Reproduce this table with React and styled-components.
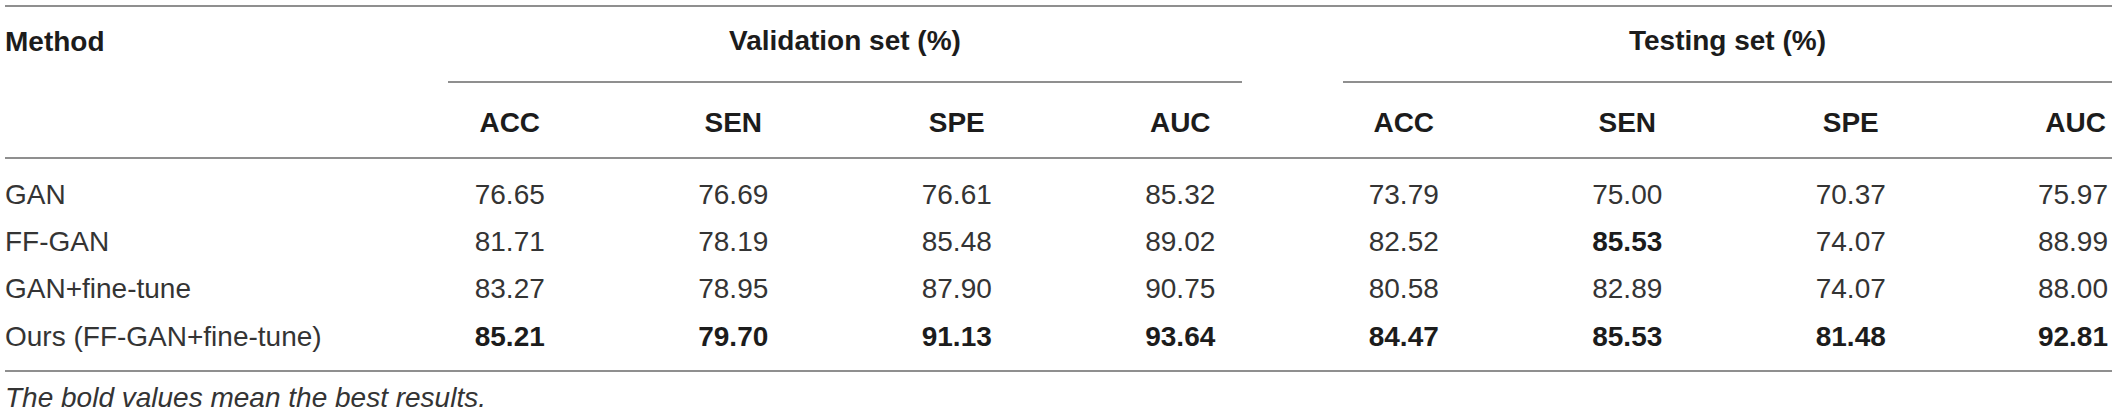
import React from "react";
import styled, { createGlobalStyle } from "styled-components";

const C = {
  text: "#343434",
  strong: "#1c1c1c",
  rule: "#8f8f8f",
};

const COLS = "393px repeat(7, 223.5px) 1fr";

const Global = createGlobalStyle`
  body { margin: 0; background: #ffffff; }
`;

const Page = styled.div`
  padding: 5px 5px 0;
  font-family: "Liberation Sans", Arial, Helvetica, sans-serif;
  font-size: 28px;
  line-height: 32px;
  color: ${C.text};
  overflow: hidden;
`;

const Head = styled.div`
  display: grid;
  grid-template-columns: ${COLS};
  grid-template-rows: 76px 74px;
  border-top: 2px solid ${C.rule};
  border-bottom: 2px solid ${C.rule};
  font-weight: 700;
  color: ${C.strong};
`;

const MethodHead = styled.div`
  grid-row: 1;
  grid-column: 1;
  display: flex;
  align-items: center;
  padding-bottom: 6px;
`;

const GroupHead = styled.div`
  grid-row: 1;
  grid-column: ${p => p.$cols};
  margin: 0 ${p => p.$mr}px 0 ${p => p.$ml}px;
  display: flex;
  align-items: center;
  justify-content: center;
  padding-bottom: 6px;
  border-bottom: 2px solid ${C.rule};
`;

const SubHead = styled.div`
  grid-row: 2;
  display: flex;
  align-items: center;
  justify-content: ${p => (p.$last ? "flex-end" : "center")};
  padding: 6px ${p => (p.$last ? "6px" : "0")} 0 0;
`;

const Body = styled.div`
  padding: 12px 0 10px;
  border-bottom: 2px solid ${C.rule};
`;

const Row = styled.div`
  display: grid;
  grid-template-columns: ${COLS};
  height: 47.3px;
  align-items: center;
`;

const Name = styled.div`
  text-align: left;
`;

const Cell = styled.div`
  text-align: ${p => (p.$last ? "right" : "center")};
  padding-right: ${p => (p.$last ? "4px" : "0")};
  font-weight: ${p => (p.$bold ? 700 : 400)};
  color: ${p => (p.$bold ? C.strong : C.text)};
`;

const Caption = styled.div`
  padding-top: 10px;
  font-style: italic;
`;

const METRICS = ["ACC", "SEN", "SPE", "AUC"];

// bold = best value in its column
const ROWS = [
  { name: "GAN", vals: ["76.65", "76.69", "76.61", "85.32", "73.79", "75.00", "70.37", "75.97"], bold: [] },
  { name: "FF-GAN", vals: ["81.71", "78.19", "85.48", "89.02", "82.52", "85.53", "74.07", "88.99"], bold: [5] },
  { name: "GAN+fine-tune", vals: ["83.27", "78.95", "87.90", "90.75", "80.58", "82.89", "74.07", "88.00"], bold: [] },
  { name: "Ours (FF-GAN+fine-tune)", vals: ["85.21", "79.70", "91.13", "93.64", "84.47", "85.53", "81.48", "92.81"], bold: [0, 1, 2, 3, 4, 5, 6, 7] },
];

const App = () => {
  const subHeads = [...METRICS, ...METRICS];

  return (
    <Page>
      <Global />
      <Head>
        <MethodHead>Method</MethodHead>
        <GroupHead $cols="2 / 6" $ml={50} $mr={50}>Validation set (%)</GroupHead>
        <GroupHead $cols="6 / 10" $ml={51} $mr={0}>Testing set (%)</GroupHead>
        {subHeads.map((m, i) => (
          <SubHead key={i} style={{ gridColumn: i + 2 }} $last={i === 7}>{m}</SubHead>
        ))}
      </Head>

      <Body>
        {ROWS.map(r => (
          <Row key={r.name}>
            <Name>{r.name}</Name>
            {r.vals.map((v, i) => (
              <Cell key={i} $last={i === 7} $bold={r.bold.includes(i)}>{v}</Cell>
            ))}
          </Row>
        ))}
      </Body>

      <Caption>The bold values mean the best results.</Caption>
    </Page>
  );
};

export default App;
